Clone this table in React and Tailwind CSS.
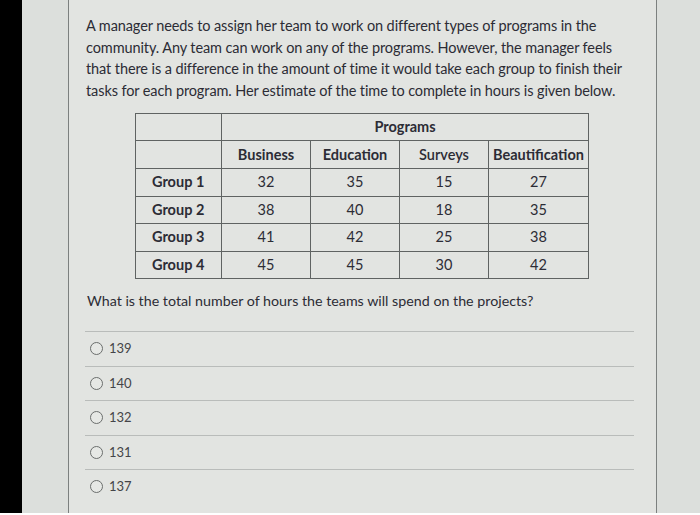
const rows = [
  ["Group 1", 32, 35, 15, 27],
  ["Group 2", 38, 40, 18, 35],
  ["Group 3", 41, 42, 25, 38],
  ["Group 4", 45, 45, 30, 42],
];

const lines = [
  "A manager needs to assign her team to work on different types of programs in the",
  "community. Any team can work on any of the programs. However, the manager feels",
  "that there is a difference in the amount of time it would take each group to finish their",
  "tasks for each program. Her estimate of the time to complete in hours is given below.",
];

const options = ["139", "140", "132", "131", "137"];

export default function App() {
  return (
    <div className="w-[700px] h-[515px] flex flex-col bg-white overflow-hidden" style={{ fontFamily: "Lato, 'Open Sans', sans-serif" }}>
      <div className="flex flex-1 min-h-0">
        <div className="w-[22px] bg-black shrink-0" />
        <div className="flex-1 bg-[#dcdfdc] pl-[46px] pr-[43px] flex">
          <div className="flex-1 bg-[#e2e4e1] border-l border-r border-[#7c807f] pt-[15px] text-[#2c2c35]">
            <p className="pl-[17px] text-[14.5px] leading-[21.5px] tracking-[-0.1px]">
              {lines.map((l) => (
                <span key={l} className="block whitespace-nowrap">{l}</span>
              ))}
            </p>
            <table className="ml-[66px] mt-[12px] w-[454px] border-collapse text-[14.5px] text-[#2c2c35]">
              <tbody>
                <tr className="h-[27px]">
                  <td className="border border-[#5f6362] w-[86px]" />
                  <td colSpan={4} className="border border-[#5f6362] text-center font-bold">Programs</td>
                </tr>
                <tr className="h-[28px]">
                  <td className="border border-[#5f6362]" />
                  <td className="border border-[#5f6362] text-center font-bold w-[89px]">Business</td>
                  <td className="border border-[#5f6362] text-center font-bold w-[89px]">Education</td>
                  <td className="border border-[#5f6362] text-center font-semibold w-[89px]">Surveys</td>
                  <td className="border border-[#5f6362] text-center font-bold">Beautification</td>
                </tr>
                {rows.map((r) => (
                  <tr key={r[0]} className="h-[27.5px]">
                    <td className="border border-[#5f6362] font-bold pl-[16px]">{r[0]}</td>
                    {r.slice(1).map((v, i) => (
                      <td key={i} className="border border-[#5f6362] text-center">{v}</td>
                    ))}
                  </tr>
                ))}
              </tbody>
            </table>
            <p className="pl-[18px] mt-[12px] text-[14.25px] leading-[20px]">
              What is the total number of hours the teams will spend on the projects?
            </p>
            <div className="mt-[20px] ml-[16px] mr-[22px]">
              {options.map((o) => (
                <div key={o} className="h-[34.5px] flex items-center gap-[6px] pl-[5px] border-t border-[#b9bcba]">
                  <span className="w-[13px] h-[13px] rounded-full border border-[#6b6e6d] bg-[#e6e8e5]" />
                  <span className="text-[13px] text-[#444448]">{o}</span>
                </div>
              ))}
            </div>
          </div>
        </div>
      </div>
      <div className="h-[2px] bg-white" />
    </div>
  );
}
